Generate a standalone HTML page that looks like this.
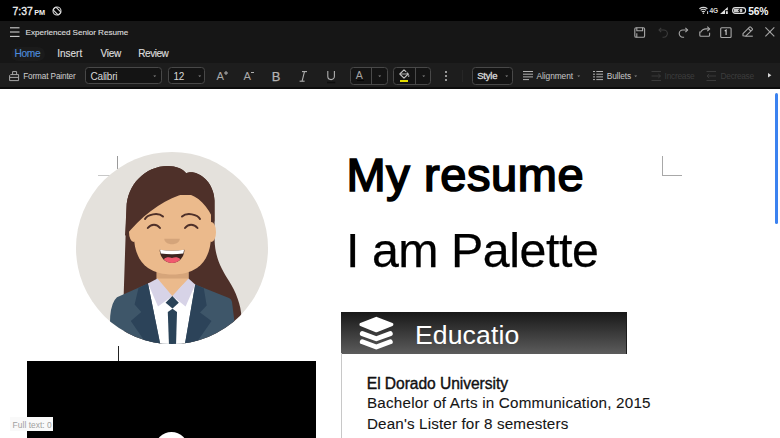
<!DOCTYPE html>
<html><head><meta charset="utf-8">
<style>
*{margin:0;padding:0;box-sizing:border-box}
html,body{width:780px;height:438px;overflow:hidden;background:#fff}
body{position:relative;font-family:"Liberation Sans",sans-serif}
.a{position:absolute;white-space:nowrap}
#status{left:0;top:0;width:780px;height:20.8px;background:#000}
#hdr{left:0;top:20.8px;width:780px;height:42px;background:#161616}
#tb{left:0;top:62.8px;width:780px;height:24.4px;background:#1d1d1d}
#tbl{left:0;top:87.2px;width:780px;height:1.8px;background:#0c0c0c}
.wt{color:#e6e6e6}
.box{position:absolute;border:1px solid #484848;border-radius:3.5px;background:#141414}
svg{position:absolute;overflow:visible}
</style></head><body>
<!-- status bar -->
<div id="status" class="a"></div>
<div class="a" style="left:12.5px;top:6.2px;color:#f2f2f2;font-size:10.4px;-webkit-text-stroke:0.3px #f2f2f2;letter-spacing:0px">7:37</div>
<div class="a" style="left:34.2px;top:7.9px;color:#f2f2f2;font-size:7.3px;font-weight:700;letter-spacing:-0.1px">PM</div>
<svg style="left:51.8px;top:5.8px" width="10" height="10" viewBox="0 0 10 10"><circle cx="5" cy="5" r="4" fill="none" stroke="#d8d8d8" stroke-width="1.1"/><rect x="3" y="1.3" width="4" height="7.4" rx="0.9" transform="rotate(-45 5 5)" fill="#000" stroke="#e0e0e0" stroke-width="1.1"/></svg>
<svg style="left:698.5px;top:6.9px" width="10" height="7" viewBox="0 0 10 7"><g fill="none" stroke="#d8d8d8" stroke-width="1.1"><path d="M0.4 1.7 Q4.4 -0.9 8.4 1.7"/><path d="M1.6 3.3 Q4.4 1.3 7.2 3.3"/><path d="M2.8 4.9 Q4.4 3.8 6 4.9"/></g><circle cx="4.4" cy="6.3" r="0.8" fill="#d8d8d8"/><rect x="8.1" y="4.2" width="1" height="2.8" fill="#d8d8d8"/></svg>
<div class="a" style="left:709.6px;top:6.9px;color:#d8d8d8;font-size:6.6px;font-weight:700;letter-spacing:-0.2px">4G</div>
<svg style="left:720px;top:6.9px" width="8" height="7" viewBox="0 0 8 7"><path d="M0 7 L7.8 0 L7.8 3.2 L5 3.2 L5 7 Z" fill="#e0e0e0"/><rect x="5.9" y="4.2" width="1.9" height="2.8" fill="#e0e0e0"/></svg>
<svg style="left:731.7px;top:7.4px" width="15" height="7" viewBox="0 0 15 7"><rect x="0.6" y="0.6" width="13" height="5.8" rx="2.9" fill="none" stroke="#e0e0e0" stroke-width="1.1"/><rect x="1.8" y="1.8" width="8.5" height="3.4" rx="1" fill="#c8c8c8"/><path d="M8.3 1.3 L6.3 3.8 L7.9 3.8 L6.9 5.9" stroke="#111" stroke-width="1" fill="none"/></svg>
<div class="a" style="left:748.3px;top:5.9px;color:#f5f5f5;font-size:10.3px;font-weight:700;letter-spacing:-0.2px">56%</div>

<!-- header -->
<div id="hdr" class="a"></div>
<svg style="left:9.7px;top:26.8px" width="10" height="11" viewBox="0 0 10 11"><g stroke="#d0d0d0" stroke-width="1.1"><path d="M0 0.8 H9.5"/><path d="M0 5 H9.5"/><path d="M0 9.4 H9.5"/></g></svg>
<div class="a" style="left:25.6px;top:28.4px;font-size:8.1px;color:#dadada;-webkit-text-stroke:0.15px #dadada;letter-spacing:-0.02px">Experienced Senior Resume</div>
<div class="a" style="left:10.5px;top:46.5px;width:34px;height:14px;border-radius:7px;background:#1b1b1b"></div>
<div class="a" style="left:14.4px;top:47.9px;font-size:10.2px;color:#4d8bdc;-webkit-text-stroke:0.15px #4d8bdc;letter-spacing:-0.3px">Home</div>
<div class="a" style="left:57.2px;top:47.8px;font-size:10px;color:#dcdcdc;-webkit-text-stroke:0.15px #dcdcdc">Insert</div>
<div class="a" style="left:100.6px;top:47.8px;font-size:10px;color:#dcdcdc;-webkit-text-stroke:0.15px #dcdcdc;letter-spacing:-0.3px">View</div>
<div class="a" style="left:138.3px;top:47.8px;font-size:10px;color:#dcdcdc;-webkit-text-stroke:0.15px #dcdcdc;letter-spacing:-0.45px">Review</div>

<!-- header right icons -->
<svg style="left:634px;top:26.5px" width="12" height="11" viewBox="0 0 12 11"><g fill="none" stroke="#a8a8a8" stroke-width="1.1"><rect x="0.8" y="0.7" width="9.8" height="9.6" rx="1.3"/><path d="M2.8 0.7 V3.8 H8.6 V0.7"/><path d="M2.8 10.3 V6.3"/></g></svg>
<svg style="left:657.5px;top:26.5px" width="11" height="11" viewBox="0 0 11 11"><g fill="none" stroke="#3c3c3c" stroke-width="1.1"><path d="M3.2 0.8 L1 3 L3.2 5.2"/><path d="M1 3 H5.8 A3.6 3.6 0 0 1 5.8 10.2 H4.5"/></g></svg>
<svg style="left:678.2px;top:26.5px" width="11" height="11" viewBox="0 0 11 11"><g fill="none" stroke="#a8a8a8" stroke-width="1.1"><path d="M7.4 0.8 L9.6 3 L7.4 5.2"/><path d="M9.6 3 H4.8 A3.6 3.6 0 0 0 4.8 10.2 H6.1"/></g></svg>
<svg style="left:699.4px;top:26.3px" width="12" height="11" viewBox="0 0 12 11"><g fill="none" stroke="#a8a8a8" stroke-width="1.1"><path d="M8.3 0.6 L10.6 2.9 L8.3 5.2"/><path d="M10.6 2.9 H7 C4 2.9 2.5 4.6 1.5 6.5"/><path d="M0.8 5.5 V9.3 Q0.8 10.3 1.8 10.3 H9.6 Q10.6 10.3 10.6 9.3 V6.8"/></g></svg>
<svg style="left:720.3px;top:26.5px" width="12" height="11" viewBox="0 0 12 11"><rect x="0.7" y="0.7" width="10.4" height="9.8" rx="1" fill="none" stroke="#a8a8a8" stroke-width="1.1"/><path d="M4.7 4 L6.1 3.1 V7.9" fill="none" stroke="#d0d0d0" stroke-width="1.1"/></svg>
<svg style="left:742px;top:25.8px" width="12" height="11" viewBox="0 0 12 11"><g fill="none" stroke="#a8a8a8" stroke-width="1.1" stroke-linejoin="round"><path d="M1 9.8 L1 7.6 L7.5 1.1 Q8.1 0.5 8.7 1.1 L10.2 2.6 Q10.8 3.2 10.2 3.8 L3.7 10.2 Z"/><path d="M6.2 2.4 L8.8 5"/><path d="M3.7 10.2 H10.8"/></g></svg>
<svg style="left:764.6px;top:26.6px" width="10" height="10" viewBox="0 0 10 10"><g stroke="#a8a8a8" stroke-width="1.1"><path d="M0.4 0.4 L9.3 9.3"/><path d="M9.3 0.4 L0.4 9.3"/></g></svg>

<!-- toolbar -->
<div id="tb" class="a"></div>
<div id="tbl" class="a"></div>
<svg style="left:9.4px;top:70.6px" width="11" height="11" viewBox="0 0 11 11"><g fill="none" stroke="#a8a8a8" stroke-width="1" stroke-linejoin="round"><path d="M3.6 3.6 V0.6 H7.6 V3.6"/><path d="M1.6 3.6 H9.6 V9.6 H0.6 V4.6 Z"/><path d="M0.8 6.4 H9.6"/></g></svg>
<div class="a" style="left:23.2px;top:72.1px;font-size:8.2px;color:#cfcfcf;letter-spacing:-0.12px">Format Painter</div>
<div class="box" style="left:85.3px;top:67.1px;width:77px;height:17px"></div>
<div class="a" style="left:90.6px;top:70.8px;font-size:10px;color:#d8d8d8;letter-spacing:-0.25px">Calibri</div>
<svg style="left:152.5px;top:74.5px" width="4" height="3" viewBox="0 0 4 3"><path d="M0.3 0.5 H3.2 L1.75 2 Z" fill="#8a8a8a"/></svg>
<div class="box" style="left:168.3px;top:67.1px;width:37px;height:17px"></div>
<div class="a" style="left:173.4px;top:70.8px;font-size:10px;color:#d8d8d8;letter-spacing:-0.2px">12</div>
<svg style="left:198px;top:74.5px" width="4" height="3" viewBox="0 0 4 3"><path d="M0.3 0.5 H3.2 L1.75 2 Z" fill="#8a8a8a"/></svg>

<div class="a" style="left:216.4px;top:70.3px;font-size:11.2px;color:#a8a8a8">A</div>
<svg style="left:223.5px;top:70.5px" width="4" height="4" viewBox="0 0 4 4"><path d="M2 0 V4 M0 2 H4" stroke="#b0b0b0" stroke-width="1"/></svg>
<div class="a" style="left:243.6px;top:70.3px;font-size:11.2px;color:#a8a8a8">A</div>
<div class="a" style="left:250.6px;top:72.3px;width:3.7px;height:1px;background:#b0b0b0"></div>
<div class="a" style="left:271.8px;top:68.9px;font-size:12.9px;color:#b4b4b4;-webkit-text-stroke:0.25px #b4b4b4">B</div>
<svg style="left:299px;top:70.5px" width="9" height="11" viewBox="0 0 9 11"><g stroke="#b0b0b0" stroke-width="1.1"><path d="M3 0.6 H8"/><path d="M0.6 10.2 H5.6"/><path d="M5.5 0.6 L3.1 10.2"/></g></svg>
<svg style="left:326.5px;top:70.5px" width="9" height="13" viewBox="0 0 9 13"><path d="M0.8 0 V5.3 A3.3 3.3 0 0 0 7.4 5.3 V0" fill="none" stroke="#b0b0b0" stroke-width="1.1"/><path d="M0 11.5 H8.2" stroke="#0e0e0e" stroke-width="1.6"/></svg>

<div class="box" style="left:350.3px;top:67px;width:37.5px;height:17.5px"></div>
<div class="a" style="left:371px;top:67px;width:1px;height:17.5px;background:#4a4a4a"></div>
<div class="a" style="left:355.8px;top:69.2px;font-size:10.6px;color:#a4a4a4">A</div>
<div class="a" style="left:356.8px;top:79.6px;width:7.6px;height:1.6px;background:#050505"></div>
<svg style="left:378px;top:74.5px" width="4" height="3" viewBox="0 0 4 3"><path d="M0.3 0.5 H3.2 L1.75 2 Z" fill="#8a8a8a"/></svg>
<div class="box" style="left:393.4px;top:67px;width:38px;height:17.5px"></div>
<div class="a" style="left:415px;top:67px;width:1px;height:17.5px;background:#4a4a4a"></div>
<svg style="left:0;top:0" width="780" height="100" viewBox="0 0 780 100"><path d="M406.2 71.9 L404 69.8 L399.8 74 L404 78.2 L408.2 74 L406.8 72.6" fill="none" stroke="#c4c4c4" stroke-width="1.1" stroke-linejoin="round"/><path d="M400.3 74 H407.8" stroke="#c4c4c4" stroke-width="0.9"/><path d="M408.2 74.2 Q409.4 76 408.6 77" fill="none" stroke="#c4c4c4" stroke-width="0.9"/></svg>
<div class="a" style="left:399.6px;top:80px;width:8.5px;height:1.8px;background:#e3dc00"></div>
<svg style="left:422px;top:74.5px" width="4" height="3" viewBox="0 0 4 3"><path d="M0.3 0.5 H3.2 L1.75 2 Z" fill="#8a8a8a"/></svg>
<div class="a" style="left:444.5px;top:70.8px;width:2px;height:2px;background:#c0c0c0;border-radius:1px"></div>
<div class="a" style="left:444.5px;top:74.7px;width:2px;height:2px;background:#c0c0c0;border-radius:1px"></div>
<div class="a" style="left:444.5px;top:78.6px;width:2px;height:2px;background:#c0c0c0;border-radius:1px"></div>
<div class="a" style="left:461.8px;top:70px;width:1px;height:12px;background:#262626"></div>
<div class="box" style="left:471.6px;top:67px;width:41.5px;height:17.5px"></div>
<div class="a" style="left:477.2px;top:69.8px;font-size:9.5px;font-weight:400;color:#d8d8d8;-webkit-text-stroke:0.35px #d8d8d8;letter-spacing:-0.2px">Style</div>
<svg style="left:504.5px;top:74.5px" width="4" height="3" viewBox="0 0 4 3"><path d="M0.3 0.5 H3.2 L1.75 2 Z" fill="#8a8a8a"/></svg>

<svg style="left:522.8px;top:71.3px" width="11" height="10" viewBox="0 0 11 10"><g stroke="#b0b0b0" stroke-width="1"><path d="M0 0.5 H10"/><path d="M0 3.2 H10"/><path d="M0 5.9 H10"/><path d="M0 8.6 H6"/></g></svg>
<div class="a" style="left:536.6px;top:71px;font-size:8.4px;color:#c8c8c8;letter-spacing:-0.1px">Alignment</div>
<svg style="left:576.5px;top:74.5px" width="4" height="3" viewBox="0 0 4 3"><path d="M0.3 0.5 H3.2 L1.75 2 Z" fill="#8a8a8a"/></svg>
<svg style="left:592.9px;top:71.3px" width="11" height="10" viewBox="0 0 11 10"><g stroke="#b0b0b0" stroke-width="1"><path d="M0 0.5 H2"/><path d="M3.3 0.5 H10"/><path d="M0 3.2 H2"/><path d="M3.3 3.2 H10"/><path d="M0 5.9 H2"/><path d="M3.3 5.9 H10"/><path d="M0 8.6 H2"/><path d="M3.3 8.6 H10"/></g></svg>
<div class="a" style="left:606.7px;top:71px;font-size:8.4px;color:#c8c8c8;letter-spacing:-0.1px">Bullets</div>
<svg style="left:634px;top:74.5px" width="4" height="3" viewBox="0 0 4 3"><path d="M0.3 0.5 H3.2 L1.75 2 Z" fill="#8a8a8a"/></svg>
<svg style="left:650.7px;top:71px" width="11" height="10" viewBox="0 0 11 10"><g stroke="#3a3a3a" stroke-width="1" fill="none"><path d="M0.5 0.5 H10"/><path d="M0.5 9.5 H10"/><path d="M0.5 5 H9.5 M7.3 3 L9.5 5 L7.3 7"/></g></svg>
<div class="a" style="left:664.6px;top:71px;font-size:8.4px;color:#3c3c3c;letter-spacing:-0.28px">Increase</div>
<svg style="left:706.4px;top:71px" width="11" height="10" viewBox="0 0 11 10"><g stroke="#3a3a3a" stroke-width="1" fill="none"><path d="M0.5 0.5 H10"/><path d="M0.5 9.5 H10"/><path d="M1 5 H10 M3.2 3 L1 5 L3.2 7"/></g></svg>
<div class="a" style="left:720.6px;top:71px;font-size:8.4px;color:#3c3c3c;letter-spacing:-0.33px">Decrease</div>
<svg style="left:768px;top:72.5px" width="4" height="5" viewBox="0 0 4 5"><path d="M0 0 L3.4 2.3 L0 4.6 Z" fill="#d8d8d8"/></svg>

<!-- document -->
<div class="a" style="left:775px;top:93px;width:3px;height:131px;border-radius:1.5px;background:#3b82f0"></div>
<div class="a" style="left:117px;top:156px;width:1px;height:13px;background:#9a9a9a"></div>
<div class="a" style="left:98px;top:175px;width:20px;height:1px;background:#c8c8c8"></div>
<div class="a" style="left:662px;top:156px;width:1px;height:20px;background:#a8a8a8"></div>
<div class="a" style="left:662px;top:175px;width:20px;height:1px;background:#a8a8a8"></div>
<div class="a" style="left:118px;top:346px;width:1px;height:16px;background:#222"></div>

<!-- avatar -->
<svg style="left:76px;top:152px" width="192" height="192" viewBox="76 152 192 192">
<defs><clipPath id="cc"><circle cx="172" cy="248" r="96"/></clipPath></defs>
<circle cx="172" cy="248" r="96" fill="#e4e1dc"/>
<g clip-path="url(#cc)">
<path d="M123.5 300 L126.5 208 C127 185 145 166 168 166 C176 166 183 169 186.2 173.3 C189 172 191 172 193.5 172.4 C206 175 214.5 188 214.5 200.7 L214.6 240 C215 258 222 270 229 281 C236 292 241 305 241.5 317 Q241.5 326 236 333 L236 345 L124 345 Z" fill="#4e3029"/>
<rect x="156.7" y="262" width="31.8" height="30" fill="#ebba8c"/>
<rect x="156.7" y="272" width="31.8" height="6.7" fill="#d6a57a"/>
<ellipse cx="133.5" cy="232" rx="4.5" ry="10" fill="#ebba8c"/>
<ellipse cx="211.5" cy="232" rx="4.5" ry="10" fill="#ebba8c"/>
<path d="M134 195 L134 236 C134 250 139 262 148 268 C155 272.5 163 274.5 172.5 274.5 C182 274.5 190 272.5 197 268 C206 262 211 250 211 236 L211 195 Z" fill="#ebba8c"/>
<path d="M125 236 L126.5 208 C127 185 145 166 168 166 C176 166 183 169 186.2 173.3 C189 172 191 172 193.5 172.4 C206 175 214.5 188 214.5 200.7 L214.5 222 C208 206 198 195 185.3 193.4 C168 198 148 210 130.5 230 Z" fill="#4e3029"/>
<g fill="none" stroke="#4e3029" stroke-width="2" stroke-linecap="round">
<path d="M145 219 C147.5 214.5 158 212 163 216.5"/>
<path d="M182 216.5 C187 212 197.5 214.5 200 219"/>
<path d="M147.8 228 C151 223.5 157 223.5 160 228"/>
<path d="M185 228 C188 223.5 194 223.5 197.5 228"/>
</g>
<path d="M164.3 238.7 H179.8 C179.8 242 176 244.2 172 244.2 C168 244.2 164.3 242 164.3 238.7 Z" fill="#d4a47a"/>
<path d="M159.7 249.7 C168 251.2 176 251.2 184.4 249.7 C184.4 257 179 263 172 263 C165 263 159.7 257 159.7 249.7 Z" fill="#3d2520"/>
<path d="M160 249.7 C168 251.2 176 251.2 184.1 249.7 L183.3 253.4 C176 254.4 168 254.4 160.8 253.4 Z" fill="#fff"/>
<path d="M163.8 259.3 C166 257 169 256.8 172 258 C175 256.8 178 257 180.4 259.3 C178 262 175.5 263 172 263 C168.5 263 166 262 163.8 259.3 Z" fill="#f05a6e"/>
<path d="M109 350 L110.2 316 Q111.5 302 117 297.3 L148 283.5 L195.2 284.4 L229 298 Q231.6 299.2 232 302 L235 326 L240 350 Z" fill="#3e5669"/>
<path d="M148 283.5 L195.2 284.4 L184.6 346 L160.6 346 Z" fill="#fff"/>
<path d="M156.7 278.7 L188.5 278.7 L172.3 297 Z" fill="#ebba8c"/>
<path d="M148 283.5 L157.5 278.5 L172.3 296 L158 306.5 Z" fill="#d7d3e7"/>
<path d="M195.2 284.4 L188.5 278.5 L172.3 296 L185.6 306.5 Z" fill="#d7d3e7"/>
<path d="M148 283.5 L138.5 288 L134.6 304.6 L141.3 312 L130.8 321 L148 346 L160.6 346 Z" fill="#2c4359"/>
<path d="M195.2 284.4 L203.8 288.3 L206.7 305.6 L200 312.5 L211.5 321 L194.2 346 L184.6 346 Z" fill="#2c4359"/>
<path d="M172.3 296 L178.8 302.7 L172.5 308.5 L165.6 302.7 Z" fill="#2a4358"/>
<path d="M172.5 308.8 L177 312 L176 346 L169 346 L167.8 312 Z" fill="#2a4358"/>
</g>
</svg>

<!-- black video block -->
<div class="a" style="left:27px;top:361px;width:289px;height:77px;background:#000"></div>
<div class="a" style="left:155px;top:431.6px;width:33px;height:33px;border-radius:50%;background:#fff"></div>
<div class="a" style="left:10px;top:417px;width:43px;height:14px;background:#f9f9f9"></div>
<div class="a" style="left:12.6px;top:419.6px;font-size:8.4px;color:#a0a0a0;letter-spacing:0.05px">Full text: 0</div>

<!-- right column -->
<div class="a" style="left:346.5px;top:147px;font-size:47px;font-weight:400;color:#000;-webkit-text-stroke:1.7px #000;letter-spacing:0.6px">My resume</div>
<div class="a" style="left:346px;top:222.3px;font-size:48.3px;color:#000;-webkit-text-stroke:0.25px #000;letter-spacing:-0.45px">I am Palette</div>

<div class="a" style="left:340.8px;top:312px;width:286.7px;height:42px;background:linear-gradient(#181818,#5c5c5c);border-right:1px solid #1c1c1c"></div>
<div class="a" style="left:340.5px;top:353px;width:1px;height:85px;background:#c8c8c8"></div>
<svg style="left:0;top:0" width="780" height="438" viewBox="0 0 780 438"><path d="M376.3 318.3 L391.9 324.5 L376.3 330.8 L360.9 324.5 Z" fill="#fff" stroke="#fff" stroke-width="3" stroke-linejoin="round"/><g fill="none" stroke="#fff" stroke-width="4.9" stroke-linecap="round" stroke-linejoin="round"><path d="M362.3 333.6 L376.3 338.8 L390.3 333.6"/><path d="M362.3 341.8 L376.3 347 L390.3 341.8"/></g></svg>
<div class="a" style="left:415px;top:319.5px;font-size:26.6px;color:#fff;letter-spacing:0.1px">Educatio</div>

<div class="a" style="left:366.8px;top:374.8px;font-size:15.6px;font-weight:400;color:#111;-webkit-text-stroke:0.4px #111;letter-spacing:-0.05px">El Dorado University</div>
<div class="a" style="left:367px;top:393.7px;font-size:15.2px;color:#151515;-webkit-text-stroke:0.1px #151515;letter-spacing:0.22px">Bachelor of Arts in Communication, 2015</div>
<div class="a" style="left:367px;top:414.6px;font-size:15.2px;color:#151515;-webkit-text-stroke:0.1px #151515;letter-spacing:0.15px">Dean's Lister for 8 semesters</div>
</body></html>
